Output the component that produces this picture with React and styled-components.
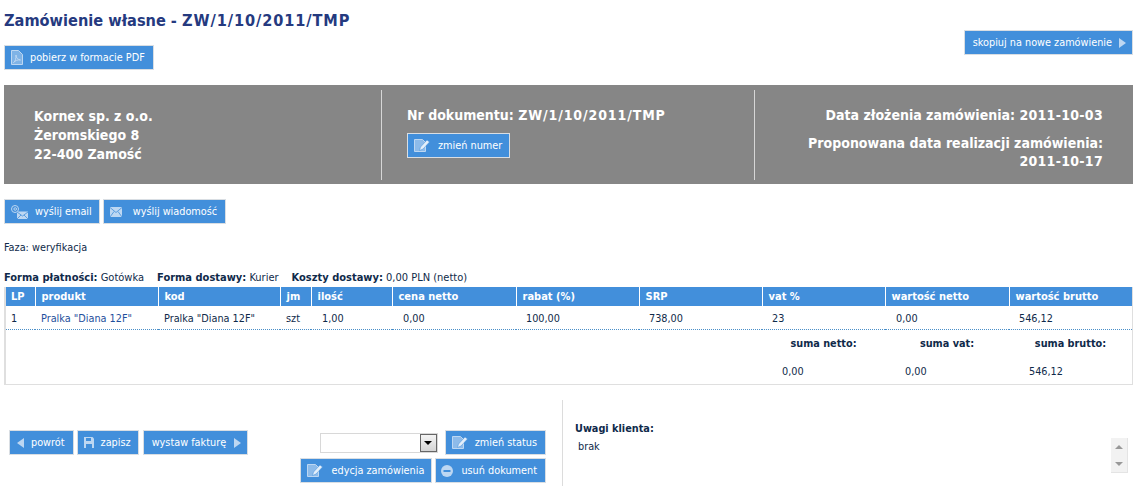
import React from 'react'
import styled, { createGlobalStyle } from 'styled-components'

const FONT = `"DejaVu Sans Condensed", "DejaVu Sans", "Noto Sans", sans-serif`
const BLUE = '#428fdb'
const INK = '#0f2a4a'

const GlobalStyle = createGlobalStyle`
  html, body {
    margin: 0;
    padding: 0;
    background: #fff;
  }
  body {
    font-family: ${FONT};
    font-size: 10.8px;
    color: ${INK};
    overflow: hidden;
  }
`

const Page = styled.div`
  width: 1139px;
  height: 486px;
  box-sizing: border-box;
  padding: 0 6px 0 4px;
  overflow: hidden;
`

const TopRow = styled.div`
  display: flex;
  justify-content: space-between;
  height: 85px;
`

const TopLeft = styled.div`
  display: flex;
  flex-direction: column;
  align-items: flex-start;
`

const Title = styled.h1`
  margin: 11px 0 0;
  height: 34px;
  font-size: 16.2px;
  line-height: 20px;
  font-weight: 700;
  color: #253a7f;
`

const Wide = styled.span`
  letter-spacing: ${({ $by }) => $by}px;
`

const Button = styled.a`
  display: inline-flex;
  align-items: center;
  height: 25px;
  box-sizing: border-box;
  padding: ${({ $pad }) => $pad || '0 8px'};
  gap: ${({ $gap }) => $gap || '7px'};
  background: ${BLUE};
  border: 1px solid #d9dee3;
  color: #fff;
  font-size: 10.8px;
  white-space: nowrap;
  svg {
    flex: none;
  }
`

const CopyButton = styled(Button)`
  margin-top: 30px;
`

const InvoiceButton = styled(Button)`
  margin-left: 1px;
`

const Banner = styled.div`
  display: grid;
  grid-template-columns: 377px 373px 1fr;
  height: 99px;
  box-sizing: border-box;
  padding: 5px 0;
  background: #868686;
  color: #fff;
  font-size: 14px;
  font-weight: 700;
`

const BannerCell = styled.div`
  box-sizing: border-box;
  border-left: ${({ $first }) => ($first ? '0' : '1px solid #d6d6d6')};
`

const Address = styled(BannerCell)`
  padding: 17px 0 0 30px;
  line-height: 19px;
`

const DocNumber = styled(BannerCell)`
  padding: 16px 0 0 25px;
  line-height: 19px;
  ${Button} {
    margin-top: 8px;
    font-weight: 400;
  }
`

const Dates = styled(BannerCell)`
  padding: 16px 30px 0 0;
  text-align: right;
  line-height: 18px;
  p {
    margin: 0 0 10px;
  }
`

const ActionRow = styled.div`
  display: flex;
  gap: 3px;
  margin-top: 15px;
`

const Phase = styled.div`
  margin-top: 17px;
  line-height: 14px;
`

const Terms = styled.div`
  display: flex;
  gap: 13px;
  margin-top: 16px;
  height: 14px;
  font-size: 11px;
  line-height: 14px;
  b {
    font-weight: 700;
  }
`

const OrderBox = styled.div`
  margin-top: 2px;
  border: solid #dfdfdf;
  border-width: 0 1px 1px 2px;
`

const Table = styled.table`
  width: 100%;
  table-layout: fixed;
  border-collapse: collapse;
`

const HeadCell = styled.th`
  height: 19px;
  padding: 0 0 0 6px;
  background: ${BLUE};
  border-left: 1px solid #fff;
  color: #fff;
  font-size: 11px;
  font-weight: 700;
  text-align: left;
  &:first-child {
    border-left: 0;
    padding-left: 5px;
  }
`

const Cell = styled.td`
  height: 21px;
  padding: 2px 0 0 ${({ $pad }) => $pad || 6}px;
  border-bottom: 1px dotted #4a8fc9;
  color: ${({ $link }) => ($link ? '#1f4f9c' : INK)};
  white-space: nowrap;
`

const SumLabel = styled.td`
  height: 26px;
  padding: 0;
  font-weight: 700;
  text-align: center;
`

const SumValue = styled.td`
  height: 26px;
  padding: 2px 0 0 20px;
`

const Footer = styled.div`
  display: flex;
  margin-top: 15px;
  height: 86px;
`

const FooterLeft = styled.div`
  display: flex;
  justify-content: space-between;
  width: 558px;
  box-sizing: border-box;
  padding: 30px 16px 0 5px;
`

const BackGroup = styled.div`
  display: flex;
  gap: 3px;
  align-items: flex-start;
`

const StatusGroup = styled.div`
  display: flex;
  flex-direction: column;
  align-items: flex-end;
  gap: 3px;
`

const StatusRow = styled.div`
  display: flex;
  gap: ${({ $gap }) => $gap}px;
  align-items: center;
`

const SelectBox = styled.div`
  display: flex;
  justify-content: flex-end;
  width: 118px;
  height: 20px;
  box-sizing: border-box;
  border: 1px solid #d8d8d8;
`

const SelectArrow = styled.div`
  display: flex;
  align-items: center;
  justify-content: center;
  width: 17px;
  box-sizing: border-box;
  border: 1px solid #666;
  background: linear-gradient(#f4f4f4, #d4d4d4);
  &::after {
    content: '';
    border: solid transparent;
    border-width: 4px 4px 0;
    border-top-color: #000;
  }
`

const Notes = styled.div`
  flex: 1;
  display: flex;
  justify-content: space-between;
  border-left: 1px solid #dcdcdc;
  padding: 22px 5px 0 12px;
`

const NotesTitle = styled.div`
  font-weight: 700;
  line-height: 14px;
`

const NotesText = styled.div`
  margin: 4px 0 0 3px;
  line-height: 14px;
`

const Scroller = styled.div`
  display: flex;
  flex-direction: column;
  align-items: center;
  justify-content: space-around;
  width: 16px;
  height: 34px;
  margin-top: 16px;
  background: #f2f2f2;
  border-right: 1px solid #e4e4e4;
  border-bottom: 1px solid #e4e4e4;
`

const ScrollArrow = styled.i`
  border: solid transparent;
  border-width: ${({ $up }) => ($up ? '0 4px 4px' : '4px 4px 0')};
  border-bottom-color: ${({ $up }) => ($up ? '#999' : 'transparent')};
  border-top-color: ${({ $up }) => ($up ? 'transparent' : '#999')};
`

const ICON = '#bdd7f2'

const ArrowRight = () => (
  <svg width="7" height="10" viewBox="0 0 7 10"><path d="M0 0l7 5-7 5z" fill={ICON} /></svg>
)

const ArrowLeft = () => (
  <svg width="7" height="10" viewBox="0 0 7 10"><path d="M7 0L0 5l7 5z" fill={ICON} /></svg>
)

const PdfIcon = () => (
  <svg width="12" height="15" viewBox="0 0 12 15" fill="#7fb3e6" stroke={ICON}>
    <path d="M.5.5h7l4 4v10H.5z" />
    <path d="M2.500 12.500c2-1 2.500-4 2.500-7.500 0 3 2 4.500 4.500 5-3-.5-5 .5-7 2.500z" fill="none" />
  </svg>
)

const EditIcon = () => (
  <svg width="16" height="13" viewBox="0 0 16 13" fill="none">
    <path d="M.5.5h8l3 3v9H.5z" stroke={ICON} fill="#8dbbea" />
    <path d="M5.500 11.500l1-3.500 6.500-7 2.500 2-6.500 7z" fill="#e4effa" stroke={BLUE} strokeWidth=".5" />
  </svg>
)

const EmailIcon = () => (
  <svg width="17" height="14" viewBox="0 0 17 14" fill="none">
    <circle cx="4" cy="4" r="3.500" stroke={ICON} />
    <circle cx="4.200" cy="4" r="1.300" stroke={ICON} />
    <path d="M6 6.500h11V14H6z" fill={ICON} />
    <path d="M6 7l5.500 4L17 7M6 14l4-4M17 14l-4-4" stroke={BLUE} strokeWidth=".8" />
  </svg>
)

const MailIcon = () => (
  <svg width="12" height="10" viewBox="0 0 12 10" fill="none">
    <path d="M0 0h12v10H0z" fill={ICON} />
    <path d="M0 .5l6 5 6-5M0 10l4-5.500M12 10L8 4.500" stroke={BLUE} strokeWidth=".8" />
  </svg>
)

const SaveIcon = () => (
  <svg width="10" height="11" viewBox="0 0 10 11">
    <path d="M0 0h8.500L10 1.500V11H0z" fill={ICON} />
    <path d="M2 1h5v3H2zM2 7h6v4H2z" fill={BLUE} />
  </svg>
)

const MinusIcon = () => (
  <svg width="12" height="12" viewBox="0 0 12 12">
    <circle cx="6" cy="6" r="6" fill={ICON} />
    <path d="M2.500 5h7v2h-7z" fill={BLUE} />
  </svg>
)

const columns = [
  ['LP', 29],
  ['produkt', 123],
  ['kod', 122],
  ['jm', 31],
  ['ilość', 81],
  ['cena netto', 124],
  ['rabat (%)', 123],
  ['SRP', 123],
  ['vat %', 123],
  ['wartość netto', 124],
  ['wartość brutto', 123],
]

export default function App() {
  return (
    <Page>
      <GlobalStyle />
      <TopRow>
        <TopLeft>
          <Title>
            Zamówienie własne - <Wide $by={0.9}>ZW/1/10/2011/TMP</Wide>
          </Title>
          <Button $pad="0 8px 0 6px">
            <PdfIcon />
            pobierz w formacie PDF
          </Button>
        </TopLeft>
        <CopyButton $pad="0 6px 0 8px">
          skopiuj na nowe zamówienie
          <ArrowRight />
        </CopyButton>
      </TopRow>

      <Banner>
        <Address $first>
          Kornex sp. z o.o.
          <br />
          Żeromskiego 8
          <br />
          22-400 Zamość
        </Address>
        <DocNumber>
          Nr dokumentu: <Wide $by={0.9}>ZW/1/10/2011/TMP</Wide>
          <br />
          <Button $gap="8px" $pad="0 7px 0 6px">
            <EditIcon />
            zmień numer
          </Button>
        </DocNumber>
        <Dates>
          <p>Data złożenia zamówienia: <Wide $by={0.3}>2011-10-03</Wide></p>
          <p>
            Proponowana data realizacji zamówienia:
            <br />
            <Wide $by={0.3}>2011-10-17</Wide>
          </p>
        </Dates>
      </Banner>

      <ActionRow>
        <Button $pad="0 7px 0 6px" $gap="7px">
          <EmailIcon />
          wyślij email
        </Button>
        <Button $pad="0 8px 0 6px" $gap="11px">
          <MailIcon />
          wyślij wiadomość
        </Button>
      </ActionRow>

      <Phase>Faza: weryfikacja</Phase>

      <Terms>
        <span><b>Forma płatności:</b> Gotówka</span>
        <span><b>Forma dostawy:</b> Kurier</span>
        <span><b>Koszty dostawy:</b> 0,00 PLN (netto)</span>
      </Terms>

      <OrderBox>
        <Table>
          <colgroup>
            {columns.map(([name, width]) => (
              <col key={name} width={width} />
            ))}
          </colgroup>
          <thead>
            <tr>
              {columns.map(([name]) => (
                <HeadCell key={name}>{name}</HeadCell>
              ))}
            </tr>
          </thead>
          <tbody>
            <tr>
              <Cell $pad={5}>1</Cell>
              <Cell $link>Pralka "Diana 12F"</Cell>
              <Cell>Pralka "Diana 12F"</Cell>
              <Cell>szt</Cell>
              <Cell $pad={11}>1,00</Cell>
              <Cell $pad={11}>0,00</Cell>
              <Cell $pad={10}>100,00</Cell>
              <Cell $pad={10}>738,00</Cell>
              <Cell $pad={10}>23</Cell>
              <Cell $pad={11}>0,00</Cell>
              <Cell $pad={10}>546,12</Cell>
            </tr>
            <tr>
              <td colSpan={8} />
              <SumLabel>suma netto:</SumLabel>
              <SumLabel>suma vat:</SumLabel>
              <SumLabel>suma brutto:</SumLabel>
            </tr>
            <tr>
              <td colSpan={8} />
              <SumValue>0,00</SumValue>
              <SumValue>0,00</SumValue>
              <SumValue>546,12</SumValue>
            </tr>
          </tbody>
        </Table>
      </OrderBox>

      <Footer>
        <FooterLeft>
          <BackGroup>
            <Button $pad="0 8px 0 7px">
              <ArrowLeft />
              powrót
            </Button>
            <Button $pad="0 7px 0 6px">
              <SaveIcon />
              zapisz
            </Button>
            <InvoiceButton $pad="0 6px 0 8px" $gap="8px">
              wystaw fakturę
              <ArrowRight />
            </InvoiceButton>
          </BackGroup>
          <StatusGroup>
            <StatusRow $gap={7}>
              <SelectBox>
                <SelectArrow />
              </SelectBox>
              <Button $pad="0 8px 0 6px">
                <EditIcon />
                zmień status
              </Button>
            </StatusRow>
            <StatusRow $gap={3}>
              <Button $pad="0 7px 0 6px" $gap="9px">
                <EditIcon />
                edycja zamówienia
              </Button>
              <Button $pad="0 8px 0 5px" $gap="8px">
                <MinusIcon />
                usuń dokument
              </Button>
            </StatusRow>
          </StatusGroup>
        </FooterLeft>
        <Notes>
          <div>
            <NotesTitle>Uwagi klienta:</NotesTitle>
            <NotesText>brak</NotesText>
          </div>
          <Scroller>
            <ScrollArrow $up />
            <ScrollArrow />
          </Scroller>
        </Notes>
      </Footer>
    </Page>
  )
}
